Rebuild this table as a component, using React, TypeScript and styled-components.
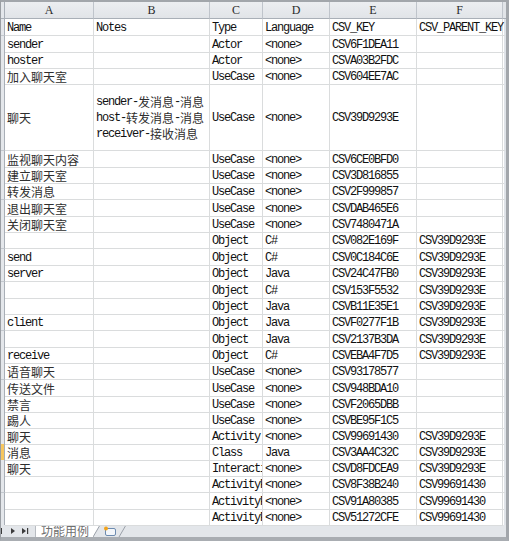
import React from 'react';
import styled, { createGlobalStyle } from 'styled-components';

const GlobalStyle = createGlobalStyle`
  html, body { margin: 0; padding: 0; background: #ffffff; }
  body { font-family: "Liberation Mono", "Noto Sans CJK SC", monospace; }
`;

const COLS = '4px 89px 116px 53px 67px 87px 86px 3px';

const Frame = styled.div`
  box-sizing: border-box;
  width: 509px;
  height: 541px;
  border-left: 1px solid #9a9ea3;
  border-top: 2px solid #a2a6ab;
  border-right: 3px solid #a2a6ab;
  border-bottom: 4px solid #a9adb2;
  display: flex;
  flex-direction: column;
  overflow: hidden;
  background: #ffffff;
`;

const Sheet = styled.div`
  display: flex;
  flex-direction: column;
`;

const HeaderRow = styled.div`
  display: grid;
  grid-template-columns: ${COLS};
  height: 17px;
`;

const Corner = styled.div`
  box-sizing: border-box;
  background: #e4e7eb;
  border-right: 1px solid #a9afb7;
  border-bottom: 1px solid #a9afb7;
`;

const ColHead = styled.div`
  box-sizing: border-box;
  background: linear-gradient(#eceef1, #e1e4e8);
  border-right: 1px solid #bfc4cb;
  border-bottom: 1px solid #a9afb7;
  display: flex;
  align-items: center;
  justify-content: center;
  font-family: "Liberation Serif", serif;
  font-size: 12px;
  color: #2b2b2b;
`;

const EdgeHead = styled.div`
  box-sizing: border-box;
  background: #e1e4e8;
  border-bottom: 1px solid #a9afb7;
`;

const Row = styled.div<{ $h: number }>`
  display: grid;
  grid-template-columns: ${COLS};
  height: ${(p) => p.$h}px;
`;

const RowHead = styled.div<{ $active?: boolean }>`
  box-sizing: border-box;
  background: ${(p) => (p.$active ? '#f6c660' : '#e4e7eb')};
  border-right: 1px solid #a9afb7;
  border-bottom: 1px solid #c3c8ce;
`;

const Cell = styled.div<{ $clip?: boolean; $top?: boolean }>`
  box-sizing: border-box;
  border-right: 1px solid #dadcdd;
  border-bottom: 1px solid #dadcdd;
  padding: 2px 0 0 2px;
  display: flex;
  align-items: center;
  white-space: nowrap;
  overflow: ${(p) => (p.$clip ? 'hidden' : 'visible')};
  font-size: 12px;
  letter-spacing: -1.2px;
  line-height: 14px;
  color: #111111;
  position: relative;
  z-index: ${(p) => (p.$top ? 1 : 0)};
  min-width: 0;
`;

const Text = styled.span`
  display: inline-block;
  line-height: 14px;
`;

const EdgeCell = styled.div`
  box-sizing: border-box;
  border-right: 2px solid #dfe3e8;
  border-bottom: 1px solid #dadcdd;
`;

const Lines = styled.div`
  display: flex;
  flex-direction: column;
`;

const Line = styled.div`
  height: 16px;
  display: flex;
  align-items: center;
`;

const Cjk = styled.span`
  display: inline-block;
  font-family: "Noto Sans CJK SC", sans-serif;
  letter-spacing: 0;
  font-size: 12px;
  line-height: 14px;
  color: #2e2e2e;
  vertical-align: top;
`;

const TabBar = styled.div`
  height: 12px;
  background: #e3e6ea;
  display: flex;
  align-items: stretch;
`;

const NavArea = styled.div`
  width: 34px;
  display: flex;
  align-items: center;
`;

const Tab = styled.div`
  display: flex;
  align-items: stretch;
`;

const TabBody = styled.div`
  box-sizing: border-box;
  width: 58px;
  background: #ffffff;
  border-left: 1px solid #b8bcc2;
  padding-left: 5px;
  display: flex;
  align-items: center;
  font-family: "Noto Sans CJK SC", sans-serif;
  font-size: 12px;
  line-height: 12px;
  color: #6f6f6f;
`;

type RowData = {
  h: number;
  a?: string;
  b?: string[];
  c?: string;
  d?: string;
  e?: string;
  f?: string;
  active?: boolean;
};

const P = 'CSV39D9293E';
const Q = 'CSV99691430';
const N = '<none>';
const AP = 'ActivityPartition';

const rows: RowData[] = [
  { h: 17, a: 'Name', b: ['Notes'], c: 'Type', d: 'Language', e: 'CSV_KEY', f: 'CSV_PARENT_KEY' },
  { h: 16, a: 'sender', c: 'Actor', d: N, e: 'CSV6F1DEA11' },
  { h: 16, a: 'hoster', c: 'Actor', d: N, e: 'CSVA03B2FDC' },
  { h: 16, a: '加入聊天室', c: 'UseCase', d: N, e: 'CSV604EE7AC' },
  {
    h: 67,
    a: '聊天',
    b: ['sender-发消息-消息', 'host-转发消息-消息', 'receiver-接收消息'],
    c: 'UseCase',
    d: N,
    e: 'CSV39D9293E',
  },
  { h: 16, a: '监视聊天内容', c: 'UseCase', d: N, e: 'CSV6CE0BFD0' },
  { h: 16, a: '建立聊天室', c: 'UseCase', d: N, e: 'CSV3D816855' },
  { h: 17, a: '转发消息', c: 'UseCase', d: N, e: 'CSV2F999857' },
  { h: 16, a: '退出聊天室', c: 'UseCase', d: N, e: 'CSVDAB465E6' },
  { h: 16, a: '关闭聊天室', c: 'UseCase', d: N, e: 'CSV7480471A' },
  { h: 17, c: 'Object', d: 'C#', e: 'CSV082E169F', f: P },
  { h: 16, a: 'send', c: 'Object', d: 'C#', e: 'CSV0C184C6E', f: P },
  { h: 17, a: 'server', c: 'Object', d: 'Java', e: 'CSV24C47FB0', f: P },
  { h: 16, c: 'Object', d: 'C#', e: 'CSV153F5532', f: P },
  { h: 16, c: 'Object', d: 'Java', e: 'CSVB11E35E1', f: P },
  { h: 17, a: 'client', c: 'Object', d: 'Java', e: 'CSVF0277F1B', f: P },
  { h: 16, c: 'Object', d: 'Java', e: 'CSV2137B3DA', f: P },
  { h: 16, a: 'receive', c: 'Object', d: 'C#', e: 'CSVEBA4F7D5', f: P },
  { h: 17, a: '语音聊天', c: 'UseCase', d: N, e: 'CSV93178577' },
  { h: 16, a: '传送文件', c: 'UseCase', d: N, e: 'CSV948BDA10' },
  { h: 16, a: '禁言', c: 'UseCase', d: N, e: 'CSVF2065DBB' },
  { h: 16, a: '踢人', c: 'UseCase', d: N, e: 'CSVBE95F1C5' },
  { h: 16, a: '聊天', c: 'Activity', d: N, e: 'CSV99691430', f: P },
  { h: 16, a: '消息', c: 'Class', d: 'Java', e: 'CSV3AA4C32C', f: P, active: true },
  { h: 16, a: '聊天', c: 'Interaction', d: N, e: 'CSVD8FDCEA9', f: P },
  { h: 17, c: AP, d: N, e: 'CSV8F38B240', f: Q },
  { h: 16, c: AP, d: N, e: 'CSV91A80385', f: Q },
  { h: 16, c: AP, d: N, e: 'CSV51272CFE', f: Q },
];

const CJK_RE = /([\u3000-\u9fff]+)/;

function runs(t: string) {
  return t.split(CJK_RE).map((part, i) =>
    CJK_RE.test(part) ? <Cjk key={i}>{part}</Cjk> : <React.Fragment key={i}>{part}</React.Fragment>
  );
}

function renderText(t?: string) {
  if (!t) return null;
  return <Text>{runs(t)}</Text>;
}

const NavIcons = () => (
  <svg width="34" height="12" viewBox="0 0 34 12">
    <rect x="0" y="3" width="1" height="6" fill="#3c3c3c" />
    <polygon points="10,3 14,6 10,9" fill="#3c3c3c" />
    <polygon points="21,3 25,6 21,9" fill="#3c3c3c" />
    <rect x="26" y="3" width="1.2" height="6" fill="#3c3c3c" />
  </svg>
);

const TabEdge = () => (
  <svg width="8" height="12" viewBox="0 0 8 12">
    <polygon points="0,0 7,0 0,12" fill="#ffffff" />
    <line x1="0" y1="12" x2="7" y2="0" stroke="#9aa0a8" strokeWidth="1" />
  </svg>
);

const NewSheet = () => (
  <svg width="26" height="12" viewBox="0 0 26 12">
    <rect x="4.5" y="3.5" width="10" height="7" rx="1.5" fill="#f3f6fa" stroke="#6d8bb0" strokeWidth="1" />
    <circle cx="5" cy="3.5" r="2" fill="#f2a31b" />
    <line x1="18" y1="12" x2="25" y2="0" stroke="#9aa0a8" strokeWidth="1" />
  </svg>
);

export default function App() {
  return (
    <>
      <GlobalStyle />
      <Frame>
        <Sheet>
          <HeaderRow>
            <Corner />
            {['A', 'B', 'C', 'D', 'E', 'F'].map((l) => (
              <ColHead key={l}>{l}</ColHead>
            ))}
            <EdgeHead />
          </HeaderRow>
          {rows.map((r, i) => (
            <Row key={i} $h={r.h}>
              <RowHead $active={r.active} />
              <Cell>{renderText(r.a)}</Cell>
              <Cell>
                {r.b && r.b.length > 1 ? (
                  <Lines>
                    {r.b.map((l, j) => (
                      <Line key={j}>{runs(l)}</Line>
                    ))}
                  </Lines>
                ) : (
                  renderText(r.b?.[0])
                )}
              </Cell>
              <Cell $clip>{renderText(r.c)}</Cell>
              <Cell>{renderText(r.d)}</Cell>
              <Cell>{renderText(r.e)}</Cell>
              <Cell $top>{renderText(r.f)}</Cell>
              <EdgeCell />
            </Row>
          ))}
        </Sheet>
        <TabBar>
          <NavArea>
            <NavIcons />
          </NavArea>
          <Tab>
            <TabBody>功能用例</TabBody>
            <TabEdge />
          </Tab>
          <NewSheet />
        </TabBar>
      </Frame>
    </>
  );
}
